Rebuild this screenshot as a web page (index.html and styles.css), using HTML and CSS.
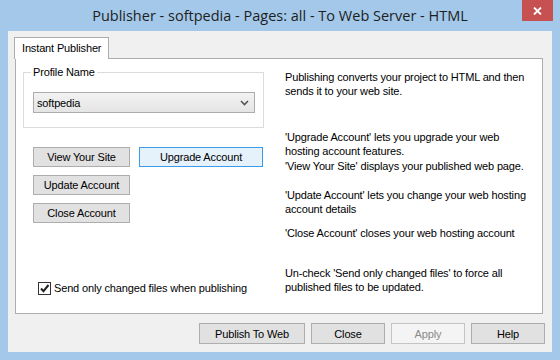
FILE: index.html
```html
<!DOCTYPE html>
<html>
<head>
<meta charset="utf-8">
<title>Publisher</title>
<link rel="stylesheet" href="styles.css">
</head>
<body>
<div class="window">
  <div class="titlebar">
    <span class="title">Publisher - softpedia - Pages: all - To Web Server - HTML</span>
    <button class="close-x" aria-label="Close">
      <svg width="9" height="8" viewBox="0 0 9 8"><path d="M1 0.5 L8 7.5 M8 0.5 L1 7.5" stroke="#fff" stroke-width="1.8" fill="none"/></svg>
    </button>
  </div>
  <div class="client">
    <div class="tabs"><div class="tab">Instant Publisher</div></div>
    <div class="panel">
      <div class="left">
        <div class="group">
          <span class="group-label">Profile Name</span>
          <div class="select">
            <span>softpedia</span>
            <svg class="chev" width="9" height="6" viewBox="0 0 9 6"><path d="M1 1 L4.5 4.5 L8 1" stroke="#555" stroke-width="1.6" fill="none"/></svg>
          </div>
        </div>
        <div class="actions">
          <div class="row">
            <button class="btn w-small">View Your Site</button>
            <button class="btn btn-default w-wide">Upgrade Account</button>
          </div>
          <button class="btn w-small">Update Account</button>
          <button class="btn w-small">Close Account</button>
        </div>
        <div class="check">
          <span class="box"><svg width="11" height="11" viewBox="0 0 11 11"><path d="M2 5.5 L4.5 8.2 L9.5 2" stroke="#222" stroke-width="2" fill="none"/></svg></span>
          <span>Send only changed files when publishing</span>
        </div>
      </div>
      <div class="right">
        <p class="p1">Publishing converts your project to HTML and then<br>sends it to your web site.</p>
        <p class="p2">'Upgrade Account' lets you upgrade your web<br>hosting account features.</p>
        <p class="p3">'View Your Site' displays your published web page.</p>
        <p class="p4">'Update Account' lets you change your web hosting<br>account details</p>
        <p class="p5">'Close Account' closes your web hosting account</p>
        <p class="p6">Un-check 'Send only changed files' to force all<br>published files to be updated.</p>
      </div>
    </div>
    <div class="footer">
      <button class="btn f-wide">Publish To Web</button>
      <button class="btn f-btn">Close</button>
      <button class="btn f-btn disabled">Apply</button>
      <button class="btn f-btn">Help</button>
    </div>
  </div>
</div>
</body>
</html>
```
FILE: styles.css
```css
html, body {
  margin: 0;
  padding: 0;
  background: #a3c8e9;
}
body {
  font-family: "Liberation Sans", Arial, sans-serif;
  font-size: 11px;
  letter-spacing: -0.15px;
  color: #000;
}
.window {
  width: 560px;
  height: 360px;
  box-sizing: border-box;
  background: #a3c8e9;
  padding: 0 8px 8px 8px;
  display: flex;
  flex-direction: column;
}
.titlebar {
  height: 31px;
  flex: none;
  position: relative;
  display: flex;
  align-items: center;
  justify-content: center;
}
.title {
  font-family: "Open Sans", "Noto Sans", sans-serif;
  font-size: 14.5px;
  letter-spacing: 0;
  color: #1e1e1e;
  margin-top: -1px;
}
.close-x {
  position: absolute;
  right: -1px;
  top: 0;
  width: 31px;
  height: 21px;
  border: none;
  padding: 0;
  background: #c75050;
  display: flex;
  align-items: center;
  justify-content: center;
}
.client {
  flex: 1;
  background: #f0f0f0;
  padding: 6px 7px 0 6px;
  display: flex;
  flex-direction: column;
}
.tabs {
  height: 21px;
  display: flex;
  position: relative;
  z-index: 1;
}
.tab {
  width: 95px;
  height: 22px;
  box-sizing: border-box;
  border: 1px solid #adadad;
  border-bottom: none;
  background: #fff;
  padding-left: 7px;
  line-height: 20px;
}
.panel {
  height: 256px;
  margin: 0 2px 0 1px;
  box-sizing: border-box;
  border: 1px solid #adadad;
  background: #fff;
  display: flex;
}
.left {
  width: 269px;
  box-sizing: border-box;
  padding: 13px 0 0 7px;
  display: flex;
  flex-direction: column;
}
.group {
  position: relative;
  width: 241px;
  height: 56px;
  box-sizing: border-box;
  border: 1px solid #dcdcdc;
  padding: 19px 0 0 9px;
}
.group-label {
  position: absolute;
  top: -8px;
  left: 7px;
  padding: 0 2px;
  background: #fff;
  line-height: 14px;
}
.select {
  width: 222px;
  height: 21px;
  box-sizing: border-box;
  border: 1px solid #acacac;
  background: linear-gradient(#f2f2f2, #e5e5e5);
  display: flex;
  align-items: center;
  justify-content: space-between;
  padding: 0 5px 0 3px;
}
.actions {
  margin: 19px 0 0 10px;
  display: flex;
  flex-direction: column;
  align-items: flex-start;
  gap: 8px;
}
.row {
  display: flex;
  gap: 9px;
}
.btn {
  height: 20px;
  box-sizing: border-box;
  border: 1px solid #adadad;
  background: #e1e1e1;
  font-family: "Liberation Sans", Arial, sans-serif;
  font-size: 11px;
  letter-spacing: -0.15px;
  color: #000;
  padding: 0;
  margin: 0;
}
.w-small { width: 97px; }
.w-wide { width: 124px; }
.btn-default {
  border-color: #3c9be8;
  background: #e5f1fb;
}
.check {
  margin: 58px 0 0 15px;
  display: flex;
  align-items: center;
  gap: 3px;
  height: 14px;
}
.box {
  width: 13px;
  height: 13px;
  box-sizing: border-box;
  border: 1px solid #333;
  background: #fff;
  display: flex;
  align-items: center;
  justify-content: center;
}
.right {
  flex: 1;
  padding-top: 11px;
}
.right p {
  margin: 0;
  line-height: 14px;
}
.right .p2 { margin-top: 32px; }
.right .p3 { margin-top: 1px; }
.right .p4 { margin-top: 15px; }
.right .p5 { margin-top: 10px; }
.right .p6 { margin-top: 26px; }
.footer {
  margin-top: 9px;
  display: flex;
  justify-content: flex-end;
  gap: 6px;
}
.footer .btn { height: 21px; }
.f-wide { width: 106px; }
.f-btn { width: 74px; }
.btn.disabled {
  background: #f4f4f4;
  border-color: #c4c4c4;
  color: #8a8a8a;
}
```
